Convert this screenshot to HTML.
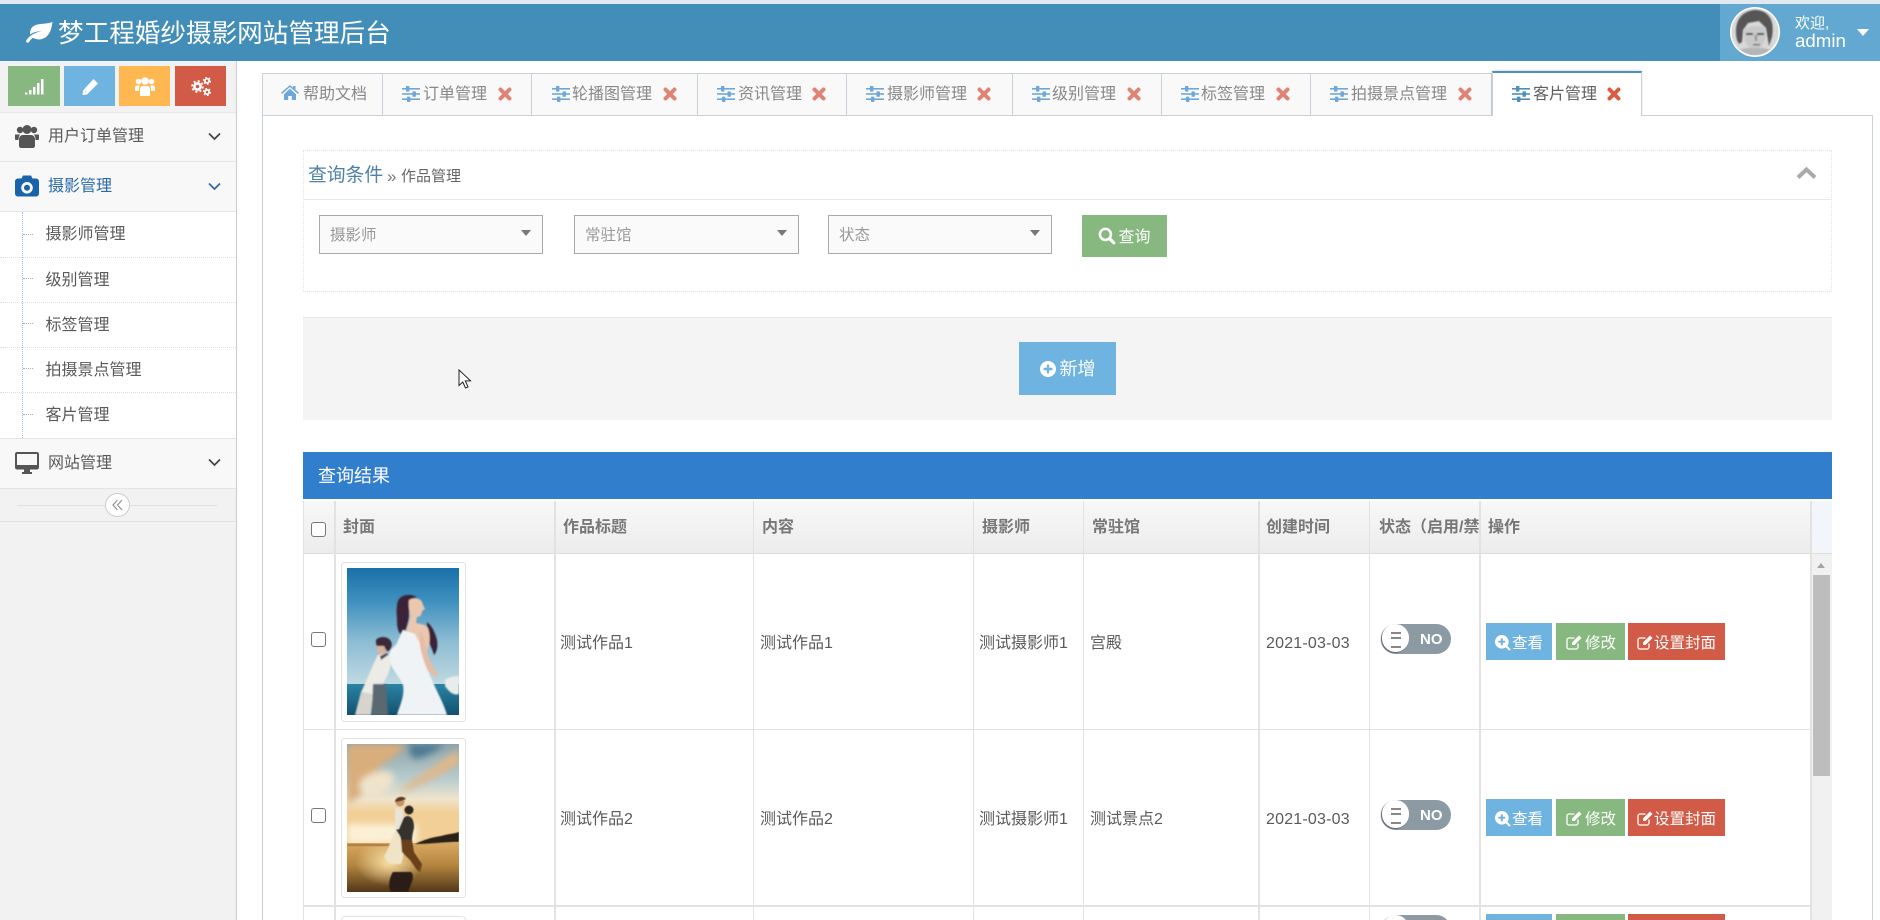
<!DOCTYPE html>
<html lang="zh-CN"><head><meta charset="utf-8"><title>梦工程婚纱摄影网站管理后台</title>
<style>
*{box-sizing:border-box}
html,body{margin:0;padding:0;width:1880px;height:920px;overflow:hidden;background:#fff}
body{position:relative;font-family:"Liberation Sans","Noto Sans CJK SC",sans-serif;color:#555}
.a{position:absolute}
.t{position:absolute;white-space:nowrap;line-height:20px;height:20px;font-size:16px;color:#5a5a5a;font-family:"Liberation Sans","Noto Sans CJK SC",sans-serif}
.h{font-weight:bold;color:#777}
.b{position:absolute;height:37px;color:#fff;font-size:15.5px;line-height:37px;white-space:nowrap}
.b svg{position:absolute;top:12px;left:9px}
.b span{position:absolute;top:2px}
svg{display:block}
.ic{position:absolute}
.tab{position:absolute;top:73px;height:43px;background:#f9f9f9;border:1px solid #c8d0d8;border-left:0}
.sl{position:absolute;top:215px;height:39px;background:#fafafa;border:1px solid #a9a9a9}
.sl i{position:absolute;right:11px;top:14px;width:0;height:0;border:5px solid transparent;border-top:6px solid #777;border-bottom:0}
.sl span{position:absolute;left:10px;top:10px;font-size:15.5px;line-height:20px;color:#999}
.vl{position:absolute;top:501px;height:419px;background:#e2e2e2}
.sw{position:absolute;left:1381px;width:70px;height:30px;border-radius:15px;background:#8b9aa3}
.sw b{position:absolute;left:1px;top:0;width:27px;height:28px;border-radius:15px;background:#fff;box-shadow:-1px 1px 1px #667}
.sw b:before{content:"";position:absolute;left:9px;top:8px;width:10px;height:12px;border-top:2px solid #888;border-bottom:2px solid #888;background:linear-gradient(#888,#888) 0 3px/10px 2px no-repeat}
.sw span{position:absolute;left:39px;top:1px;line-height:29px;font-size:15px;font-weight:bold;color:#fff}
</style></head><body>
<svg width="0" height="0" style="position:absolute"><defs>
<symbol id="sliders" viewBox="0 0 18 16"><g fill="currentColor"><rect x="0" y="2" width="18" height="1.6"/><rect x="0" y="7.200" width="18" height="1.600"/><rect x="0" y="12.400" width="18" height="1.600"/><rect x="4" y="0" width="3.400" height="5.600" rx=".6"/><rect x="10.500" y="5.400" width="3.400" height="5.400" rx=".6"/><rect x="5" y="10.600" width="3.400" height="5.400" rx=".6"/></g></symbol>
<symbol id="x" viewBox="0 0 14 14"><path fill="none" stroke="currentColor" stroke-width="4" stroke-linecap="round" d="M2.500 2.500l9 9M11.500 2.500l-9 9"/></symbol>
<symbol id="searchplus" viewBox="0 0 16 16"><path fill="currentColor" fill-rule="evenodd" d="M6.800 0a6.800 6.800 0 0 1 5.500 10.800l3.400 3.400-1.500 1.500-3.400-3.400A6.800 6.800 0 1 1 6.800 0zM5.800 3.400v2.400H3.400v2h2.400v2.400h2V7.800h2.400v-2H7.800V3.400z"/></symbol>
<symbol id="edit" viewBox="0 0 16 15"><path fill="none" stroke="currentColor" stroke-width="1.300" d="M12 8.500V12a2 2 0 0 1-2 2H3a2 2 0 0 1-2-2V5a2 2 0 0 1 2-2h5.500"/><path fill="currentColor" d="M13 .5l2.500 2.500-7 7H6V7.500z"/></symbol>
</defs></svg>

<!-- top bar -->
<div class="a" style="left:0;top:0;width:1880px;height:4px;background:#dfe9ef"></div>
<div class="a" style="left:0;top:4px;width:1880px;height:57px;background:#438eb9"></div>
<svg class="ic" style="left:26px;top:21px" width="27" height="22" viewBox="0 0 27 22"><path fill="#fff" d="M26.500 .8C25.500 8 24 14 18.500 17c-4 2.200-8.500 1.700-11.500-.2-1.500 1-3 2.500-4 4.300-.6 1-2.700.6-2.900-.6C-.1 19 3 15.500 6.500 13.500c3-1.700 6-2.700 9-3.500-4 .2-8.500 1.300-11.300 3.500C3.600 8.500 6 4.500 11.500 3.500c5.500-1 11-.5 15-2.700z"/></svg>
<div class="t" style="left:58px;top:18px;height:32px;line-height:32px;font-size:25.600px;color:#fff">梦工程婚纱摄影网站管理后台</div>
<div class="a" style="left:1720px;top:4px;width:160px;height:57px;background:#62a8d1"></div>
<svg class="ic" style="left:1729px;top:6px" width="52" height="52" viewBox="0 0 52 52"><defs><clipPath id="av"><circle cx="26" cy="26" r="23"/></clipPath><filter id="avb"><feGaussianBlur stdDeviation=".9"/></filter></defs><circle cx="26" cy="26" r="25" fill="#fff"/><circle cx="26" cy="26" r="23.500" fill="#d8d8d8"/><g clip-path="url(#av)"><g filter="url(#avb)"><path fill="#565656" d="M8 34C4 16 12 5 26 4c14 0 20 11 17 27l-3 9-3-18-7-7-11 2-5 7-1 12-3 2z"/><path fill="#c9c9c9" d="M15 24c4-4 17-6 21-2 2 7 0 15-5 20-3 2-7 2-10 0-5-4-7-11-6-18z"/><path fill="#4b4b4b" d="M17 27h7v2h-7zM28 27h7v2h-7z"/><path fill="#6f6f6f" d="M24 38h7v1.500h-7z"/><path fill="#8f8f8f" d="M26 29h2v6h-2z"/><path fill="#b5b5b5" d="M4 52c1-6 7-9 15-10h14c8 1 13 4 15 10z"/></g></g></svg>
<div class="t" style="left:1795px;top:14px;font-size:15px;color:#fff">欢迎,</div>
<div class="t" style="left:1795px;top:31px;font-size:18.700px;color:#fff;line-height:20px">admin</div>
<div class="a" style="left:1857px;top:29px;width:0;height:0;border:6px solid transparent;border-top:7px solid #fff;border-bottom:0"></div>

<!-- sidebar -->
<div class="a" style="left:0;top:61px;width:237px;height:859px;background:#f2f2f2;border-right:1px solid #ccc"></div>
<div class="a" style="left:8px;top:66px;width:52px;height:40px;background:#87b87f"></div>
<div class="a" style="left:64px;top:66px;width:51px;height:40px;background:#6fb3e0"></div>
<div class="a" style="left:119px;top:66px;width:51px;height:40px;background:#ffb752"></div>
<div class="a" style="left:175px;top:66px;width:51px;height:40px;background:#d15b47"></div>
<svg class="ic" style="left:25px;top:78px" width="19" height="17" viewBox="0 0 19 17"><g fill="#fff"><rect x="0" y="14.500" width="2.500" height="2"/><rect x="4" y="12" width="2.500" height="4.500"/><rect x="8" y="9" width="2.500" height="7.500"/><rect x="12" y="5" width="2.500" height="11.500"/><rect x="16" y="1" width="2.500" height="15.500"/></g></svg>
<svg class="ic" style="left:82px;top:79px" width="16" height="16" viewBox="0 0 16 16"><path fill="#fff" d="M11.500 0 16 4.500 5 15.500.5 16l.5-4.500zM3 12v1h1z"/></svg>
<svg class="ic" style="left:135px;top:77px" width="20" height="19" viewBox="0 0 20 19"><g fill="#fff"><circle cx="3.500" cy="4.500" r="2.800"/><circle cx="16.500" cy="4.500" r="2.800"/><circle cx="10" cy="4" r="3.800"/><path d="M0 10c0-1 .8-1.500 1.500-1.500H5c-.6.8-1 2-1 3.500v2H.8c-.4 0-.8-.4-.8-.8zM20 10c0-1-.8-1.500-1.500-1.500H15c.6.8 1 2 1 3.500v2h3.200c.4 0 .8-.4.8-.8z"/><path d="M5 12c0-2 1.500-3 3-3h4c1.500 0 3 1 3 3v6.500c0 .3-.2.5-.5.5h-9c-.3 0-.5-.2-.5-.5z"/></g></svg>
<svg class="ic" style="left:191px;top:77px" width="20" height="19" viewBox="0 0 20 19"><g fill="none" stroke="#fff"><circle cx="6.500" cy="9.500" r="3.100" stroke-width="2.600"/><circle cx="6.500" cy="9.500" r="5.400" stroke-width="1.800" stroke-dasharray="2.120 2.120"/><circle cx="16" cy="3.800" r="2.100" stroke-width="1.700"/><circle cx="16" cy="3.800" r="3.400" stroke-width="1.300" stroke-dasharray="1.780 1.780"/><circle cx="16" cy="15" r="2.100" stroke-width="1.700"/><circle cx="16" cy="15" r="3.400" stroke-width="1.300" stroke-dasharray="1.780 1.780"/></g></svg>

<!-- nav -->
<div class="a" style="left:0;top:112px;width:236px;height:50px;background:#f8f8f8;border-top:1px solid #e5e5e5;border-bottom:1px solid #e5e5e5"></div>
<svg class="ic" style="left:15px;top:125px" width="24" height="23" viewBox="0 0 24 23"><g fill="#555"><circle cx="5" cy="5" r="3.200"/><circle cx="19" cy="5" r="3.200"/><circle cx="12" cy="4.500" r="4.500"/><path d="M0 9.500h5c-1 1.500-1.500 3-1.500 5.500H1c-.6 0-1-.4-1-1zM24 9.500h-5c1 1.500 1.500 3 1.500 5.500H23c.6 0 1-.4 1-1z"/><path d="M8 10h8c2 0 4 1.500 4 4.500V21c0 1-1 2-2 2H6c-1 0-2-1-2-2v-6.500C4 11.500 6 10 8 10z"/></g></svg>
<div class="t" style="left:48px;top:127px">用户订单管理</div>
<svg class="ic" style="left:208px;top:132px" width="13" height="9" viewBox="0 0 13 9"><path fill="none" stroke="#444" stroke-width="1.700" d="M1 1.500l5.500 5.500L12 1.500"/></svg>

<div class="a" style="left:0;top:162px;width:236px;height:50px;background:#f8f8f8;border-bottom:1px solid #e5e5e5"></div>
<svg class="ic" style="left:15px;top:175px" width="24" height="22" viewBox="0 0 24 22"><path fill="#1963aa" fill-rule="evenodd" d="M8 .5h8l1.500 3H21c1.700 0 3 1.300 3 3v12c0 1.700-1.300 3-3 3H3c-1.700 0-3-1.300-3-3v-12c0-1.700 1.300-3 3-3h3.500zM12 7a5.800 5.800 0 1 0 0 11.600A5.800 5.800 0 0 0 12 7zm0 2.800a3 3 0 1 1 0 6 3 3 0 0 1 0-6z"/></svg>
<div class="t" style="left:48px;top:177px;color:#2b6aa8">摄影管理</div>
<svg class="ic" style="left:208px;top:182px" width="13" height="9" viewBox="0 0 13 9"><path fill="none" stroke="#2b6aa8" stroke-width="1.700" d="M1 1.500l5.500 5.500L12 1.500"/></svg>

<div class="a" style="left:0;top:212px;width:236px;height:226px;background:#fff"></div>
<div class="a" style="left:22px;top:212px;height:226px;border-left:1px dotted #9dbdd6"></div>
<div class="a" style="left:0;top:257px;width:236px;border-top:1px dotted #ddd"></div>
<div class="a" style="left:0;top:302px;width:236px;border-top:1px dotted #ddd"></div>
<div class="a" style="left:0;top:347px;width:236px;border-top:1px dotted #ddd"></div>
<div class="a" style="left:0;top:392px;width:236px;border-top:1px dotted #ddd"></div>
<div class="a" style="left:23px;top:234px;width:10px;border-top:1px dotted #aaa"></div>
<div class="a" style="left:23px;top:278px;width:10px;border-top:1px dotted #aaa"></div>
<div class="a" style="left:23px;top:323px;width:10px;border-top:1px dotted #aaa"></div>
<div class="a" style="left:23px;top:368px;width:10px;border-top:1px dotted #aaa"></div>
<div class="a" style="left:23px;top:414px;width:10px;border-top:1px dotted #aaa"></div>
<div class="t" style="left:45.500px;top:225px">摄影师管理</div>
<div class="t" style="left:45.500px;top:271px">级别管理</div>
<div class="t" style="left:45.500px;top:316px">标签管理</div>
<div class="t" style="left:45.500px;top:361px">拍摄景点管理</div>
<div class="t" style="left:45.500px;top:406px">客片管理</div>

<div class="a" style="left:0;top:438px;width:236px;height:51px;background:#f8f8f8;border-top:1px solid #e5e5e5;border-bottom:1px solid #e5e5e5"></div>
<svg class="ic" style="left:15px;top:452px" width="24" height="22" viewBox="0 0 24 22"><path fill="#555" fill-rule="evenodd" d="M2 0h20c1.100 0 2 .9 2 2v13.500c0 1.100-.9 2-2 2h-7v2.500h2v2H7v-2h2v-2.500H2c-1.100 0-2-.9-2-2V2C0 .9.900 0 2 0zm0 2v11h20V2z"/></svg>
<div class="t" style="left:48px;top:454px">网站管理</div>
<svg class="ic" style="left:208px;top:458px" width="13" height="9" viewBox="0 0 13 9"><path fill="none" stroke="#444" stroke-width="1.700" d="M1 1.500l5.500 5.500L12 1.500"/></svg>

<div class="a" style="left:0;top:521px;width:236px;border-top:1px solid #e0e0e0"></div>
<div class="a" style="left:17px;top:505px;width:200px;border-top:1px solid #e0e0e0"></div>
<div class="a" style="left:105px;top:493px;width:25px;height:24px;border-radius:50%;background:#fff;border:1px solid #ccc"></div>
<svg class="ic" style="left:112px;top:499px" width="11" height="12" viewBox="0 0 11 12"><path fill="none" stroke="#999" stroke-width="1.300" d="M5.500 1 1 6l4.500 5M10 1 5.500 6l4.500 5"/></svg>

<!-- tabs -->
<div class="a" style="left:262px;top:115px;width:1611px;height:805px;border:1px solid #c8d0d8;border-bottom:0;background:#fff"></div>
<div class="tab" style="left:262px;width:121px;border-left:1px solid #c8d0d8"></div>
<div class="tab" style="left:383px;width:149px"></div>
<div class="tab" style="left:532px;width:166px"></div>
<div class="tab" style="left:698px;width:149px"></div>
<div class="tab" style="left:847px;width:166px"></div>
<div class="tab" style="left:1013px;width:149px"></div>
<div class="tab" style="left:1162px;width:149px"></div>
<div class="tab" style="left:1311px;width:181px"></div>
<div class="a" style="left:1492px;top:71px;width:150px;height:45px;background:#fff;border:1px solid #c8d0d8;border-top:2px solid #4c8fbd;border-bottom:0;box-shadow:0 -1px 2px rgba(0,0,0,.12)"></div>

<svg class="ic" style="left:281px;top:85px" width="18" height="15" viewBox="0 0 18 15"><path fill="#6fa8d8" d="M9 0l3 2.600V1h2.500v3.800L18 7.800l-1 1.100L9 2 1 8.900 0 7.800zM3 9.200 9 3.600l6 5.600V15h-4.200v-4H7.200v4H3z"/></svg>
<div class="t" style="left:303px;top:85px;color:#888">帮助文档</div>

<svg class="ic" style="left:402px;top:86px;color:#6fa8d8" width="18" height="16"><use href="#sliders"/></svg>
<div class="t" style="left:423px;top:85px;color:#888">订单管理</div>
<svg class="ic" style="left:498px;top:87px;color:#e08374" width="14" height="14"><use href="#x"/></svg>

<svg class="ic" style="left:552px;top:86px;color:#6fa8d8" width="18" height="16"><use href="#sliders"/></svg>
<div class="t" style="left:572px;top:85px;color:#888">轮播图管理</div>
<svg class="ic" style="left:663px;top:87px;color:#e08374" width="14" height="14"><use href="#x"/></svg>

<svg class="ic" style="left:717px;top:86px;color:#6fa8d8" width="18" height="16"><use href="#sliders"/></svg>
<div class="t" style="left:738px;top:85px;color:#888">资讯管理</div>
<svg class="ic" style="left:812px;top:87px;color:#e08374" width="14" height="14"><use href="#x"/></svg>

<svg class="ic" style="left:866px;top:86px;color:#6fa8d8" width="18" height="16"><use href="#sliders"/></svg>
<div class="t" style="left:887px;top:85px;color:#888">摄影师管理</div>
<svg class="ic" style="left:977px;top:87px;color:#e08374" width="14" height="14"><use href="#x"/></svg>

<svg class="ic" style="left:1032px;top:86px;color:#6fa8d8" width="18" height="16"><use href="#sliders"/></svg>
<div class="t" style="left:1052px;top:85px;color:#888">级别管理</div>
<svg class="ic" style="left:1127px;top:87px;color:#e08374" width="14" height="14"><use href="#x"/></svg>

<svg class="ic" style="left:1181px;top:86px;color:#6fa8d8" width="18" height="16"><use href="#sliders"/></svg>
<div class="t" style="left:1201px;top:85px;color:#888">标签管理</div>
<svg class="ic" style="left:1276px;top:87px;color:#e08374" width="14" height="14"><use href="#x"/></svg>

<svg class="ic" style="left:1330px;top:86px;color:#6fa8d8" width="18" height="16"><use href="#sliders"/></svg>
<div class="t" style="left:1351px;top:85px;color:#888">拍摄景点管理</div>
<svg class="ic" style="left:1458px;top:87px;color:#e08374" width="14" height="14"><use href="#x"/></svg>

<svg class="ic" style="left:1512px;top:86px;color:#4c8fbd" width="18" height="16"><use href="#sliders"/></svg>
<div class="t" style="left:1533px;top:85px;color:#5f5f5f">客片管理</div>
<svg class="ic" style="left:1607px;top:87px;color:#dd5a43" width="14" height="14"><use href="#x"/></svg>

<!-- query box -->
<div class="a" style="left:303px;top:150px;width:1529px;height:142px;border:1px dotted #e2e2e2;background:#fff"></div>
<div class="a" style="left:303px;top:199px;width:1529px;border-top:1px solid #e2eaf0"></div>
<div class="t" style="left:308px;top:163px;height:24px;line-height:24px;font-size:18.800px;color:#4f80a8">查询条件</div>
<div class="t" style="left:387px;top:167px;color:#777;font-size:17px">»</div>
<div class="t" style="left:401px;top:167px;font-size:15px;color:#666">作品管理</div>
<svg class="ic" style="left:1796px;top:166px" width="21" height="14" viewBox="0 0 21 14"><path fill="none" stroke="#aaa" stroke-width="4" d="M2 11.500 10.500 3.500 19 11.500"/></svg>

<div class="sl" style="left:319px;width:224px"><span>摄影师</span><i></i></div>
<div class="sl" style="left:574px;width:225px"><span>常驻馆</span><i></i></div>
<div class="sl" style="left:828px;width:224px"><span>状态</span><i></i></div>
<div class="a" style="left:1082px;top:215px;width:85px;height:42px;background:#87b87f"></div>
<svg class="ic" style="left:1098px;top:227px" width="18" height="18" viewBox="0 0 17 17"><circle cx="7" cy="7" r="5.200" fill="none" stroke="#fff" stroke-width="2.400"/><path stroke="#fff" stroke-width="3" stroke-linecap="round" d="M11.200 11.200 15 15"/></svg>
<div class="t" style="left:1118.500px;top:228px;color:#fff">查询</div>

<!-- well -->
<div class="a" style="left:303px;top:317px;width:1529px;height:103px;background:#f4f4f4;border-top:1px solid #e8e8e8"></div>
<div class="a" style="left:1019px;top:342px;width:97px;height:53px;background:#6fb3e0"></div>
<svg class="ic" style="left:1040px;top:361px" width="16" height="16" viewBox="0 0 16 16"><path fill="#fff" fill-rule="evenodd" d="M8 0a8 8 0 1 1 0 16A8 8 0 0 1 8 0zM6.800 3.600v3.200H3.600v2.400h3.200v3.200h2.400V9.200h3.200V6.800H9.200V3.600z"/></svg>
<div class="t" style="left:1059.500px;top:358px;height:22px;line-height:22px;font-size:18px;color:#fff">新增</div>

<!-- cursor -->
<svg class="ic" style="left:458px;top:369px;z-index:5" width="14" height="21" viewBox="0 0 14 21"><path fill="#fff" stroke="#222" stroke-width="1" d="M1 1v15.500l3.800-3.500 2.700 6 2.500-1.100-2.700-5.900 5.200-.2z"/></svg>

<!-- results -->
<div class="a" style="left:303px;top:452px;width:1529px;height:47px;background:#317ecc"></div>
<div class="t" style="left:318px;top:465px;height:22px;line-height:22px;font-size:18px;color:#fff">查询结果</div>

<div class="a" style="left:303px;top:501px;width:1507px;height:53px;background:linear-gradient(#f8f8f8,#ececec);border-bottom:1px solid #ddd"></div>
<div class="a" style="left:1810px;top:501px;width:22px;height:53px;background:#f2f5f9;border-bottom:1px solid #ddd"></div>
<div class="a" style="left:1811px;top:554px;width:21px;height:366px;background:#f1f1f1"></div>
<div class="a" style="left:1813px;top:575px;width:17px;height:201px;background:#bdbdbd"></div>
<div class="a" style="left:1817px;top:563px;width:0;height:0;border:4px solid transparent;border-bottom:5px solid #a5a5a5;border-top:0"></div>

<div class="vl" style="left:303px;width:1px"></div>
<div class="vl" style="left:334px;width:2px"></div>
<div class="vl" style="left:554px;width:2px"></div>
<div class="vl" style="left:753px;width:1px"></div>
<div class="vl" style="left:973px;width:1px"></div>
<div class="vl" style="left:1083px;width:1px"></div>
<div class="vl" style="left:1258px;width:2px"></div>
<div class="vl" style="left:1369px;width:1px"></div>
<div class="vl" style="left:1479px;width:2px"></div>
<div class="vl" style="left:1810px;width:2px"></div>
<div class="a" style="left:303px;top:729px;width:1507px;height:1px;background:#e2e2e2"></div>
<div class="a" style="left:303px;top:905px;width:1507px;height:2px;background:#e2e2e2"></div>

<div class="a" style="left:311px;top:522px;width:15px;height:15px;border:1px solid #777;border-radius:3px;background:#fff"></div>
<div class="t h" style="left:343px;top:518px">封面</div>
<div class="t h" style="left:563px;top:518px">作品标题</div>
<div class="t h" style="left:762px;top:518px">内容</div>
<div class="t h" style="left:982px;top:518px">摄影师</div>
<div class="t h" style="left:1092px;top:518px">常驻馆</div>
<div class="t h" style="left:1266px;top:518px">创建时间</div>
<div class="a" style="left:1371px;top:518px;width:108px;height:20px;overflow:hidden"><div class="t h" style="left:8px;top:0">状态（启用/禁用）</div></div>
<div class="t h" style="left:1488px;top:518px">操作</div>

<!-- row 1 -->
<div class="a" style="left:311px;top:632px;width:15px;height:15px;border:1px solid #777;border-radius:3px;background:#fff"></div>
<div class="a" style="left:341px;top:562px;width:125px;height:160px;background:#fff;border:1px solid #e2e2e2;border-radius:4px"></div>
<svg class="ic" style="left:347px;top:568px" width="112" height="147" viewBox="0 0 112 147">
<defs><linearGradient id="sky1" x1="0" y1="0" x2="0" y2="1"><stop offset="0" stop-color="#1a70aa"/><stop offset=".22" stop-color="#3d8fbd"/><stop offset=".5" stop-color="#8dbdd4"/><stop offset=".78" stop-color="#bdd8e0"/></linearGradient>
<linearGradient id="sea" x1="0" y1="0" x2="0" y2="1"><stop offset="0" stop-color="#2a84a4"/><stop offset="1" stop-color="#14506f"/></linearGradient>
<filter id="bl1"><feGaussianBlur stdDeviation=".7"/></filter></defs>
<rect width="112" height="147" fill="url(#sky1)"/><rect y="116" width="112" height="31" fill="url(#sea)"/>
<g filter="url(#bl1)">
<path fill="#3a2438" d="M50 38c0-8 6-12 14-11 6 1 8 5 6 8-4 2-8 5-8 10 0 5-1 9-2 13-2 4-2 9-5 9-4-2-5-8-5-14 0-5-1-10 0-15zM80 54c5 4 8 10 10 18 1 6 0 12-3 15-2-7-5-12-7-17z"/>
<path fill="#ecc7b0" d="M62 32c5-3 11-2 13 2 1 3 2 5 3 7l-3 2c0 4-2 6-5 6l-1 6c3 1 9 1 12 5 2 6 2 12 1 17-2 6-4 10-6 14H56c-1-6 0-12 2-18 2-5 1-8 2-12 1-5 3-9 3-13 0-4-2-8-1-16z"/>
<path fill="#f0f3f5" d="M56 62l12 4c4 8 8 15 11 24 0 8 3 16 6 22 5 12 12 24 15 35H50c2-8 8-18 6-30-4-10-13-16-14-28 0-8 6-10 8-14 2-5 4-9 6-13z"/>
<path fill="#e5bda5" d="M73 62c4 6 6 16 8 26l6 13 4 4-2 4-8-6c-4-8-6-16-8-24z"/>
<path fill="#3b2c38" d="M29 72c3-4 11-4 14 0 3 3 2 8-1 11h-6c-4-1-8-6-7-11z"/>
<path fill="#d8b49d" d="M30 78h7l3 6-4 3h-5z"/>
<path fill="#ecebe5" d="M30 88c4-3 11-3 13 2 2 7-1 16-5 22l-6 14H22l-8-2 3-6c3-8 9-20 13-30z"/>
<path fill="#46495a" d="M33 88l7-3 1 2-7 5z"/>
<path fill="#d6d4cc" d="M14 124l12 2-2 21H8z"/>
<path fill="#5a6870" d="M26 116h13l2 31H25z"/>
<path fill="#e8eceb" d="M98 112c4-3 9-4 14-4v18c-5 2-10-2-14-8z"/>
</g></svg>
<div class="t" style="left:560px;top:634px">测试作品1</div>
<div class="t" style="left:760px;top:634px">测试作品1</div>
<div class="t" style="left:979px;top:634px">测试摄影师1</div>
<div class="t" style="left:1090px;top:634px">宫殿</div>
<div class="t" style="left:1266px;top:634px;letter-spacing:.2px">2021-03-03</div>
<div class="sw" style="top:624px"><b></b><span>NO</span></div>
<div class="b" style="left:1486px;top:623px;width:66px;background:#6fb3e0"><svg width="16" height="16" style="color:#fff"><use href="#searchplus"/></svg><span style="left:26px">查看</span></div>
<div class="b" style="left:1556px;top:623px;width:69px;background:#87b87f"><svg width="16" height="15" style="color:#fff;left:10px"><use href="#edit"/></svg><span style="left:29px">修改</span></div>
<div class="b" style="left:1628px;top:623px;width:97px;background:#d15b47"><svg width="16" height="15" style="color:#fff"><use href="#edit"/></svg><span style="left:26px">设置封面</span></div>

<!-- row 2 -->
<div class="a" style="left:311px;top:808px;width:15px;height:15px;border:1px solid #777;border-radius:3px;background:#fff"></div>
<div class="a" style="left:341px;top:738px;width:125px;height:160px;background:#fff;border:1px solid #e2e2e2;border-radius:4px"></div>
<svg class="ic" style="left:347px;top:744px" width="112" height="148" viewBox="0 0 112 148">
<defs><linearGradient id="sky2" x1="0" y1="0" x2="0" y2="1"><stop offset="0" stop-color="#8ba4ab"/><stop offset=".35" stop-color="#b8cccd"/><stop offset=".55" stop-color="#efe4cc"/><stop offset=".68" stop-color="#f2cf97"/></linearGradient>
<linearGradient id="gnd" x1="0" y1="0" x2="0" y2="1"><stop offset="0" stop-color="#d9a962"/><stop offset=".45" stop-color="#b4853f"/><stop offset="1" stop-color="#523818"/></linearGradient>
<radialGradient id="sun" cx=".5" cy=".5" r=".5"><stop offset="0" stop-color="#f7dfa5"/><stop offset="1" stop-color="#f7dfa5" stop-opacity="0"/></radialGradient>
<filter id="bl2"><feGaussianBlur stdDeviation="3.500"/></filter><filter id="bl3"><feGaussianBlur stdDeviation=".6"/></filter></defs>
<rect width="112" height="100" fill="url(#sky2)"/>
<g filter="url(#bl2)"><path fill="#d9ae7c" d="M0 0h58c-4 8-10 14-20 18-8 6-10 18-18 28-6 6-14 10-20 14z"/><path fill="#e0b88a" d="M112 5c-10 6-20 14-32 22-12 8-22 14-28 22l14-5c18-8 32-16 46-24z"/><path fill="#efe3cb" d="M14 36c10-8 24-12 32-6 4 8-6 20-20 24-10 2-16-10-12-18z"/><path fill="#fbf0d6" d="M0 80h70v20H0z"/><path fill="#4e7a93" d="M62 0h36c-8 6-14 10-22 13-8 3-14 3-14-13z"/></g>
<rect y="99" width="112" height="49" fill="url(#gnd)"/>
<ellipse cx="42" cy="118" rx="34" ry="24" fill="url(#sun)"/>
<g filter="url(#bl3)">
<path fill="#a8763c" d="M0 100h50v2H0z"/>
<path fill="#2c2015" d="M68 100c8-4 18-7 26-8 6-2 12-2 18-4v10c-14 0-30 2-44 2z"/>
<path fill="#f0e4c6" d="M37 112c3-4 6-12 10-24 4-2 8 0 9 6 2 6 0 14 0 20l-2 6-9 0c-3-1-6-2-8-8z"/>
<path fill="#34312f" d="M48 80c4-2 9-8 13-8 4 1 6 4 6 12-1 4-2 8-2 12l-11 0c0-4-4-8-6-12z"/>
<path fill="#6a3f1a" d="M54 96h11l2 12 8 12-2 8-3-2-7-10-8-8z"/>
<path fill="#eae4d6" d="M48 64h7l2 9-5 12-4 1z"/>
<circle cx="53" cy="58" r="4.500" fill="#c79268"/><path fill="#5e3b22" d="M48 58c0-5 8-7 11-3l-5 2z"/>
<circle cx="62" cy="66" r="4.500" fill="#2d2620"/>
<path fill="#2b1e12" d="M46 128h18c3 2 2 8 0 12l-3 8H44c-3-4-2-14 2-20z"/>
</g></svg>
<div class="t" style="left:560px;top:810px">测试作品2</div>
<div class="t" style="left:760px;top:810px">测试作品2</div>
<div class="t" style="left:979px;top:810px">测试摄影师1</div>
<div class="t" style="left:1090px;top:810px">测试景点2</div>
<div class="t" style="left:1266px;top:810px;letter-spacing:.2px">2021-03-03</div>
<div class="sw" style="top:800px"><b></b><span>NO</span></div>
<div class="b" style="left:1486px;top:799px;width:66px;background:#6fb3e0"><svg width="16" height="16" style="color:#fff"><use href="#searchplus"/></svg><span style="left:26px">查看</span></div>
<div class="b" style="left:1556px;top:799px;width:69px;background:#87b87f"><svg width="16" height="15" style="color:#fff;left:10px"><use href="#edit"/></svg><span style="left:29px">修改</span></div>
<div class="b" style="left:1628px;top:799px;width:97px;background:#d15b47"><svg width="16" height="15" style="color:#fff"><use href="#edit"/></svg><span style="left:26px">设置封面</span></div>

<!-- row 3 -->
<div class="a" style="left:341px;top:916px;width:125px;height:20px;background:#fff;border:1px solid #e2e2e2;border-radius:4px"></div>
<div class="sw" style="top:915px"><b></b></div>
<div class="a" style="left:1486px;top:914px;width:66px;height:6px;background:#6fb3e0"></div>
<div class="a" style="left:1556px;top:914px;width:69px;height:6px;background:#87b87f"></div>
<div class="a" style="left:1628px;top:914px;width:97px;height:6px;background:#d15b47"></div>
</body></html>
